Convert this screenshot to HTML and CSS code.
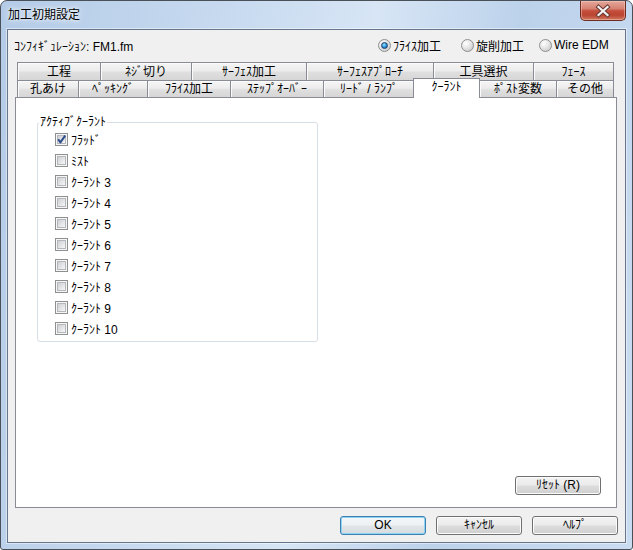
FILE: index.html
```html
<!DOCTYPE html>
<html lang="ja">
<head>
<meta charset="utf-8">
<title>加工初期設定</title>
<link rel="stylesheet" href="styles.css">
</head>
<body>
<div class="window">
  <div class="titlebar">
    <span class="title">加工初期設定</span>
    <div class="close">
      <svg width="20" height="14" viewBox="0 0 20 14">
        <path d="M5.5 3 L14.5 11 M14.5 3 L5.5 11" stroke="#6a3a34" stroke-width="4.2" stroke-linecap="square"/>
        <path d="M5.5 3 L14.5 11 M14.5 3 L5.5 11" stroke="#f4f4f4" stroke-width="2.2" stroke-linecap="square"/>
      </svg>
    </div>
  </div>
  <div class="client">
    <div class="config">
      <span class="config-label">ｺﾝﾌｨｷﾞｭﾚｰｼｮﾝ: FM1.fm</span>
      <div class="radios">
        <span class="radio-item ri1"><span class="radio on"></span>ﾌﾗｲｽ加工</span>
        <span class="radio-item ri2"><span class="radio"></span>旋削加工</span>
        <span class="radio-item ri3"><span class="radio"></span>Wire EDM</span>
      </div>
    </div>
    <div class="tabs">
      <div class="tab-row row1">
        <div class="tab w84">工程</div>
        <div class="tab w92">ﾈｼﾞ切り</div>
        <div class="tab w116">ｻｰﾌｪｽ加工</div>
        <div class="tab w128">ｻｰﾌｪｽｱﾌﾟﾛｰﾁ</div>
        <div class="tab w101">工具選択</div>
        <div class="tab w81">ﾌｪｰｽ</div>
      </div>
      <div class="tab-row row2">
        <div class="tab w62">孔あけ</div>
        <div class="tab w70">ﾍﾟｯｷﾝｸﾞ</div>
        <div class="tab w84">ﾌﾗｲｽ加工</div>
        <div class="tab w94">ｽﾃｯﾌﾟｵｰﾊﾞｰ</div>
        <div class="tab w92">ﾘｰﾄﾞ / ﾗﾝﾌﾟ</div>
        <div class="tab w67 active">ｸｰﾗﾝﾄ</div>
        <div class="tab w78">ﾎﾟｽﾄ変数</div>
        <div class="tab w58">その他</div>
      </div>
    </div>
    <div class="panel">
      <fieldset class="group">
        <legend>ｱｸﾃｨﾌﾞｸｰﾗﾝﾄ</legend>
        <div class="cb-row"><span class="cb on"><svg width="13" height="13" viewBox="0 0 13 13"><path d="M3.2 6.2 L5.4 9.4 L10.2 2.6" fill="none" stroke="#2b4a8c" stroke-width="1.9" stroke-linejoin="round"/></svg></span>ﾌﾗｯﾄﾞ</div>
        <div class="cb-row"><span class="cb"></span>ﾐｽﾄ</div>
        <div class="cb-row"><span class="cb"></span>ｸｰﾗﾝﾄ 3</div>
        <div class="cb-row"><span class="cb"></span>ｸｰﾗﾝﾄ 4</div>
        <div class="cb-row"><span class="cb"></span>ｸｰﾗﾝﾄ 5</div>
        <div class="cb-row"><span class="cb"></span>ｸｰﾗﾝﾄ 6</div>
        <div class="cb-row"><span class="cb"></span>ｸｰﾗﾝﾄ 7</div>
        <div class="cb-row"><span class="cb"></span>ｸｰﾗﾝﾄ 8</div>
        <div class="cb-row"><span class="cb"></span>ｸｰﾗﾝﾄ 9</div>
        <div class="cb-row"><span class="cb"></span>ｸｰﾗﾝﾄ 10</div>
      </fieldset>
      <button class="btn reset">ﾘｾｯﾄ (R)</button>
    </div>
    <div class="buttons">
      <button class="btn default">OK</button>
      <button class="btn">ｷｬﾝｾﾙ</button>
      <button class="btn">ﾍﾙﾌﾟ</button>
    </div>
  </div>
</div>
</body>
</html>
```
FILE: styles.css
```css
html, body {
  margin: 0;
  padding: 0;
}
body {
  width: 633px;
  height: 550px;
  overflow: hidden;
  background: #ffffff;
  font-family: "Liberation Sans", "Noto Sans CJK JP", sans-serif;
  font-size: 12px;
  color: #000;
}
.window {
  box-sizing: border-box;
  width: 633px;
  height: 550px;
  border: 1px solid #4a5058;
  border-radius: 7px 7px 3px 3px;
  background: linear-gradient(100deg, #b4cbe7 0%, #c6d9ef 30%, #d7e5f5 52%, #bcd2eb 72%, #cadcf1 100%);
  padding: 0 6px 6px;
  display: flex;
  flex-direction: column;
}
.titlebar {
  height: 28px;
  flex: none;
  display: flex;
  align-items: flex-start;
}
.title {
  padding-left: 1px;
  line-height: 28px;
  font-size: 12px;
  text-shadow: 0 0 6px rgba(255,255,255,0.95), 0 0 3px rgba(255,255,255,0.9);
}
.close {
  margin-left: auto;
  width: 46px;
  height: 20px;
  box-sizing: border-box;
  border: 1px solid #6e2b22;
  border-top: none;
  border-radius: 0 0 5px 5px;
  background: linear-gradient(#e3a89c 0%, #d68272 40%, #c44d3b 52%, #bb4533 75%, #cf7a60 100%);
  box-shadow: inset 0 0 0 1px rgba(255,210,200,0.45);
  display: flex;
  align-items: center;
  justify-content: center;
}
.client {
  flex: 1;
  border: 1px solid #67768a;
  background: #f0f0f0;
  display: flex;
  flex-direction: column;
  box-shadow: 0 0 0 1px rgba(255,255,255,0.45);
}
.config {
  display: flex;
  align-items: center;
  height: 16px;
  margin-top: 7px;
  padding-left: 6px;
  flex: none;
}
.config-label {
  flex: 1;
  white-space: nowrap;
}
.radios {
  display: flex;
  width: 247px;
}
.radio-item {
  display: flex;
  align-items: center;
  gap: 2px;
  white-space: nowrap;
}
.ri1 { width: 83px; }
.ri2 { width: 78px; }
.ri3 { flex: 1; }
.radio {
  width: 13px;
  height: 13px;
  box-sizing: border-box;
  border-radius: 50%;
  border: 1px solid #8e8f8f;
  background: radial-gradient(circle at 35% 30%, #ffffff 0%, #e6e6e6 45%, #cdcdcd 80%, #e2e2e2 100%);
  display: grid;
  place-items: center;
}
.radio.on::after {
  content: "";
  width: 7px;
  height: 7px;
  box-sizing: border-box;
  border-radius: 50%;
  border: 1px solid #1f3f66;
  background: radial-gradient(circle at 40% 35%, #9fe4ff 0%, #2a95e0 50%, #0d5aa8 100%);
}
.tabs {
  margin: 9px 0 0 9px;
  flex: none;
}
.tab-row {
  display: flex;
}
.row1 { height: 18px; }
.row2 { height: 17px; }
.tab {
  box-sizing: border-box;
  height: 100%;
  flex: none;
  border: 1px solid #898c95;
  border-bottom: none;
  margin-left: -1px;
  background: linear-gradient(#f5f5f5 0%, #ececec 45%, #dfdfdf 55%, #d6d6d6 100%);
  box-shadow: inset 1px 1px 0 #fbfbfb;
  display: flex;
  align-items: center;
  justify-content: center;
  white-space: nowrap;
  line-height: 14px;
}
.tab:first-child { margin-left: 0; }
.tab.active {
  position: relative;
  z-index: 2;
  margin-left: -2px;
  margin-top: -2px;
  height: 20px;
  background: #ffffff;
  box-shadow: none;
  align-items: flex-start;
  padding-top: 1px;
}
.w58 { width: 58px; }
.w62 { width: 62px; }
.w67 { width: 67px; }
.w70 { width: 70px; }
.w78 { width: 78px; }
.w81 { width: 81px; }
.w84 { width: 84px; }
.w92 { width: 92px; }
.w94 { width: 94px; }
.w101 { width: 101px; }
.w116 { width: 116px; }
.w128 { width: 128px; }
.panel {
  flex: 1;
  margin: 0 8px 0 7px;
  border: 1px solid #898c95;
  background: #ffffff;
  display: flex;
  flex-direction: column;
  align-items: flex-start;
}
.group {
  box-sizing: border-box;
  margin: 17px 0 0 21px;
  width: 281px;
  height: 227px;
  border: 1px solid #d5dfe5;
  border-radius: 3px;
  padding: 0 0 0 17px;
  min-inline-size: 0;
}
.group legend {
  padding: 0 1px;
  margin-left: -16px;
  line-height: 14px;
  font-size: 12px;
}
.cb-row {
  display: flex;
  align-items: center;
  gap: 3px;
  height: 21px;
  white-space: nowrap;
}
.cb {
  position: relative;
  width: 13px;
  height: 13px;
  box-sizing: border-box;
  border: 1px solid #8e8f8f;
  background: #f6f6f6;
  padding: 1px;
  display: flex;
  flex: none;
}
.cb::before {
  content: "";
  flex: 1;
  border: 1px solid #b4b8bd;
  background: linear-gradient(135deg, #cdd0d4 0%, #e2e3e5 50%, #f7f7f7 100%);
}
.cb svg {
  position: absolute;
  left: -1px;
  top: -1px;
}
.btn {
  width: 86px;
  height: 19px;
  box-sizing: border-box;
  padding: 0;
  border: 1px solid #707070;
  border-radius: 3px;
  background: linear-gradient(#f3f3f3 0%, #ebebeb 48%, #dddddd 52%, #cfcfcf 100%);
  box-shadow: inset 0 0 0 1px #fcfcfc;
  font-family: "Liberation Sans", "Noto Sans CJK JP", sans-serif;
  font-size: 12px;
  line-height: 15px;
  color: #000;
  white-space: nowrap;
}
.btn.default {
  border-color: #3c7fb1;
  box-shadow: inset 0 0 0 1px #8ed4f2;
  background: linear-gradient(#f4f7f9 0%, #eef1f3 48%, #e1e5e8 52%, #d6dbdf 100%);
}
.reset {
  margin: auto 15px 12px auto;
}
.buttons {
  flex: none;
  display: flex;
  justify-content: flex-end;
  gap: 10px;
  height: 19px;
  margin: 8px 0 7px;
  padding-right: 7px;
}
```
